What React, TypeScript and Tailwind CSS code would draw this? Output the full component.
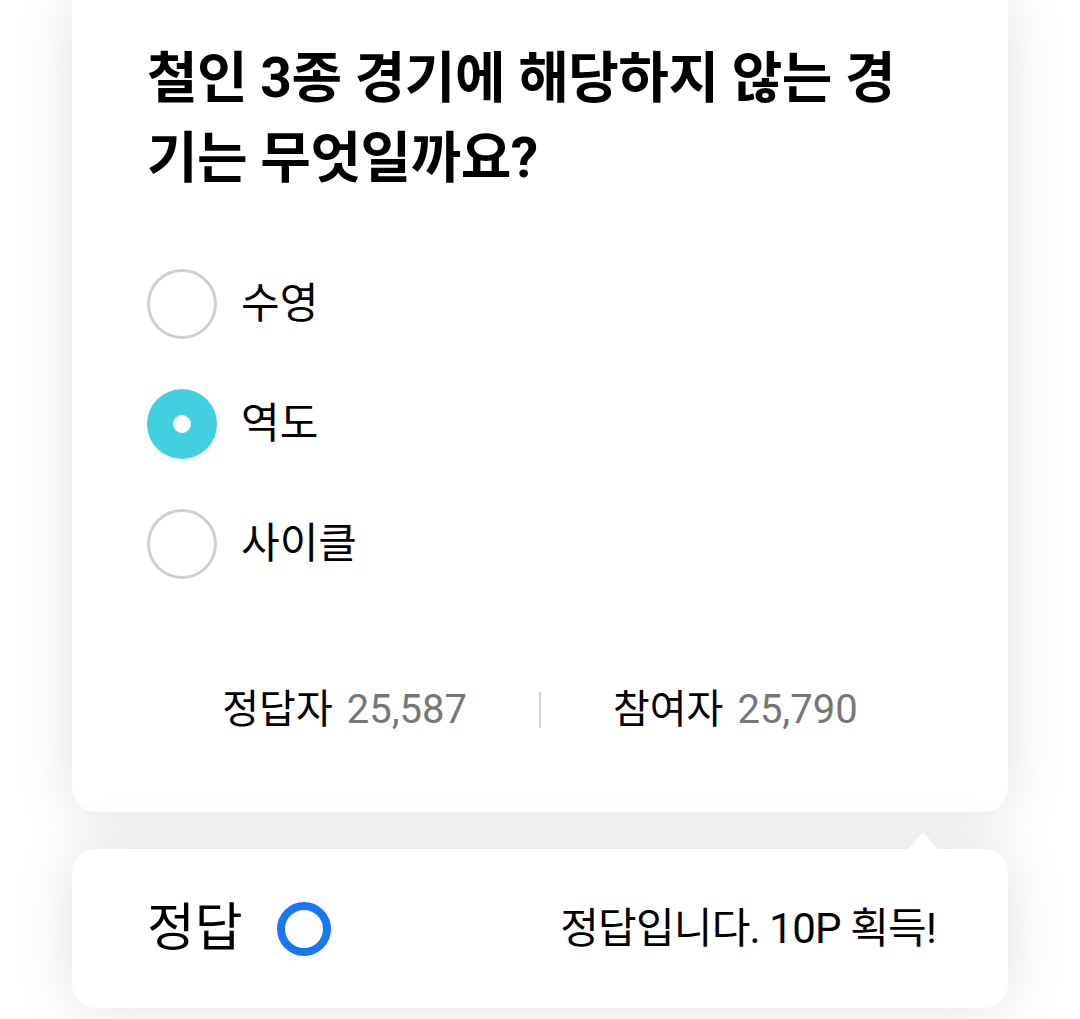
import React from 'react'

const FONT = { fontFamily: '"Roboto", "Noto Sans CJK KR", "Noto Sans", sans-serif' }

const OPTIONS = [
	{ label: '수영', selected: false },
	{ label: '역도', selected: true },
	{ label: '사이클', selected: false }
]

function Radio({ selected }: { selected: boolean }) {
	if (selected) {
		return (
			<span className="flex h-[70px] w-[70px] items-center justify-center rounded-full bg-[#42cfe0]">
				<span className="h-[18px] w-[18px] rounded-full bg-white" />
			</span>
		)
	}
	return <span className="h-[70px] w-[70px] rounded-full border-[3px] border-[#cfcfcf] bg-white" />
}

export default function App() {
	return (
		<div className="h-[1019px] w-full overflow-hidden bg-white px-[72px]" style={FONT}>
			{/* Quiz card */}
			<section className="rounded-b-[24px] bg-white px-[75px] pt-[38px] pb-[78px] shadow-[0_0_60px_rgba(0,0,0,0.12)]">
				<h1 className="text-[55px] leading-[80px] font-bold tracking-[-0.5px] text-black">
					철인 3종 경기에 해당하지 않는 경<br />기는 무엇일까요?
				</h1>

				<ul className="mt-[71px] flex flex-col gap-[50px]">
					{OPTIONS.map(o => (
						<li key={o.label} className="flex items-center gap-[24px]">
							<Radio selected={o.selected} />
							<span className="text-[42px] leading-[70px] text-black">{o.label}</span>
						</li>
					))}
				</ul>

				<div className="mt-[107px] flex items-center justify-center text-[40px] leading-[48px]">
					<div className="flex items-center gap-[14px]">
						<span className="text-black">정답자</span>
						<span className="text-[#777]">25,587</span>
					</div>
					<span className="mx-[72px] h-[36px] w-[2px] bg-[#d4d4d4]" />
					<div className="flex items-center gap-[14px]">
						<span className="text-black">참여자</span>
						<span className="text-[#777]">25,790</span>
					</div>
				</div>
			</section>

			{/* Result bubble */}
			<section className="relative mt-[37px] flex h-[159px] items-center justify-between rounded-[24px] bg-white pr-[72px] pl-[75px] shadow-[0_0_60px_rgba(0,0,0,0.12)]">
				<span className="absolute -top-[17px] right-[70px] z-10 h-0 w-0 border-r-[15px] border-b-[17px] border-l-[15px] border-r-transparent border-b-white border-l-transparent" />
				<div className="flex items-center gap-[34px]">
					<span className="text-[52px] leading-[60px] text-black">정답</span>
					<span className="h-[54px] w-[54px] rounded-full border-[8px] border-[#1877f2]" />
				</div>
				<span className="text-[42px] leading-[50px] tracking-[-0.8px] text-black">정답입니다. 10P 획득!</span>
			</section>
		</div>
	)
}
